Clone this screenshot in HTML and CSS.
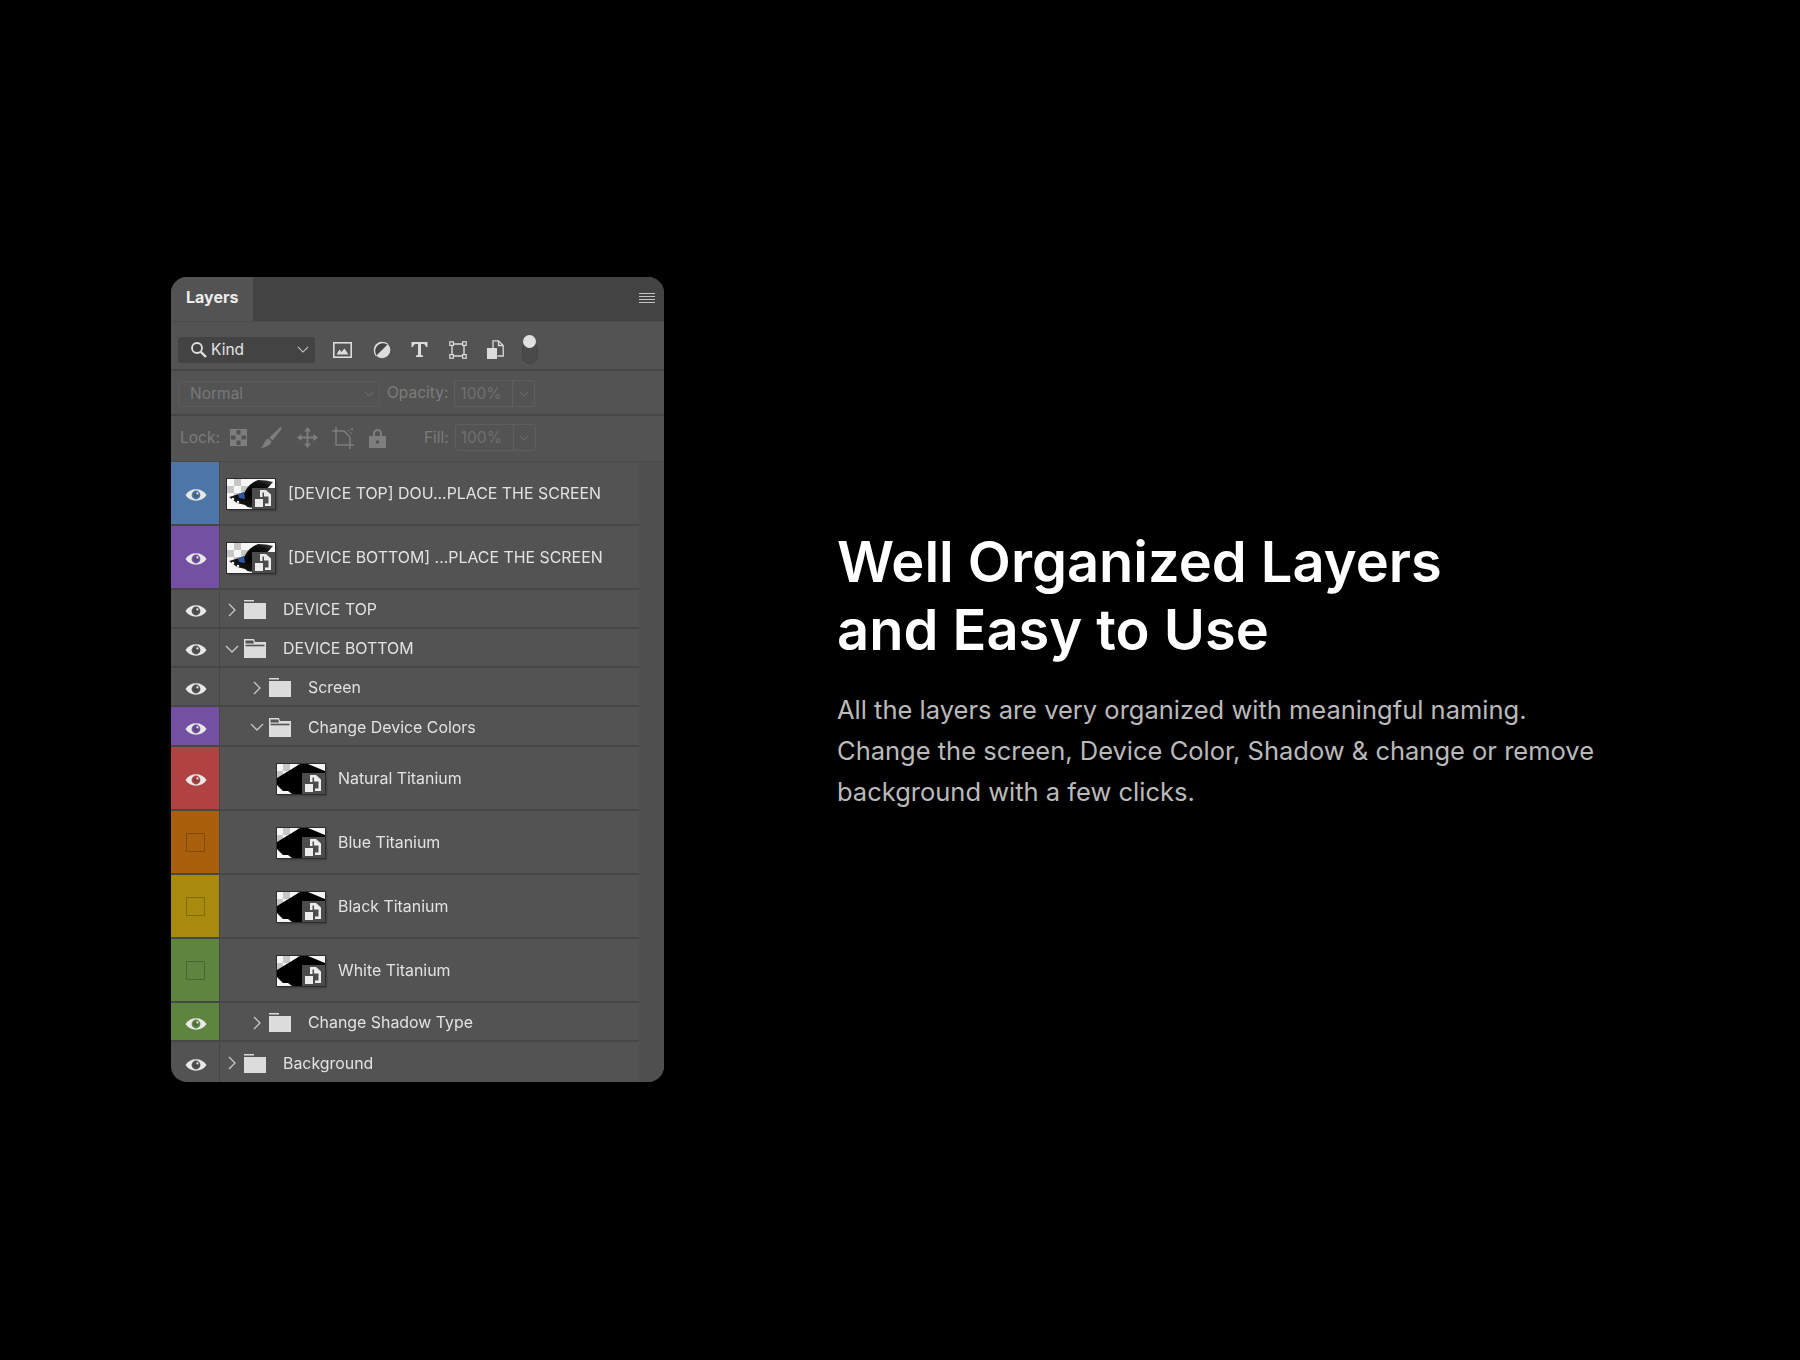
FILE: index.html
```html
<!DOCTYPE html>
<html lang="en">
<head>
    <meta charset="UTF-8">
    <title>Well Organized Layers</title>
    <link rel="stylesheet" href="styles.css">
</head>
<body>
    <!-- shared icons -->
    <svg class="sprite" xmlns="http://www.w3.org/2000/svg">
        <defs>
            <radialGradient id="blob" cx="0.55" cy="0.5" r="0.6">
                <stop offset="0" stop-color="#000"/>
                <stop offset="0.7" stop-color="#111"/>
                <stop offset="1" stop-color="#3a3a3a"/>
            </radialGradient>
        </defs>
        <symbol id="eye" viewBox="0 0 22 14">
            <path d="M.5 7C5 -.6 17 -.6 21.500 7C17 14.600 5 14.600 .5 7Z" fill="#e8e8e8"/>
            <circle cx="11" cy="7" r="4.400" fill="currentColor"/>
            <circle cx="11" cy="7" r="2.400" fill="#333" opacity=".35"/>
            <circle cx="12.400" cy="5.400" r="1.100" fill="#e8e8e8"/>
        </symbol>
        <symbol id="folder" viewBox="0 0 22 19">
            <path d="M0 0H10V1.500H0ZM0 3H22V19H0Z" fill="#dcdcdc"/>
        </symbol>
        <symbol id="folder-open" viewBox="0 0 22 19">
            <path d="M0 0H10L11 3H22V19H0Z" fill="#dcdcdc"/>
            <path d="M1.500 6.500H20.500" stroke="#535353" stroke-width="1.600"/>
            <path d="M1.500 1.500H9.200L10 4.600H1.500Z" fill="#535353"/>
        </symbol>
        <symbol id="chev-right" viewBox="0 0 8 14">
            <path d="M1 1L7 7L1 13" fill="none" stroke="#c8c8c8" stroke-width="1.300"/>
        </symbol>
        <symbol id="chev-down" viewBox="0 0 14 8">
            <path d="M1 1L7 7L13 1" fill="none" stroke="#c8c8c8" stroke-width="1.300"/>
        </symbol>
        <symbol id="badge" viewBox="0 0 23 21">
            <rect width="23" height="21" fill="#4c4c4c"/>
            <path d="M8 2H14L19 6.500V18H13V15.500H16.500V8.500H12V4.500H10.500V9H8Z" fill="#ececec"/>
            <rect x="3" y="11" width="8" height="8" fill="#ececec"/>
        </symbol>
        <symbol id="thumb-device" viewBox="0 0 48 30">
            <rect width="48" height="30" fill="#f6f6f6"/>
            <path d="M7 0H14V7H7ZM14 7H21V14H14ZM0 7H7V14H0ZM7 14H14V21H7Z" fill="#c6c6c6"/>
            <path d="M17 14Q22 4 31 1Q40 1 46 3L38 12L28 28Q21 30 18 26L10 24L2 18L12 15Z" fill="url(#blob)"/>
            <path d="M11 15L17 13L18 20L12 19Z" fill="#2f56a0"/>
            <circle cx="6" cy="20" r="1.200" fill="#f6f6f6"/>
            <circle cx="11" cy="23" r="1.200" fill="#f6f6f6"/>
            <use href="#badge" x="25" y="9" width="23" height="21"/>
        </symbol>
        <symbol id="thumb-color" viewBox="0 0 48 30">
            <rect width="48" height="30" fill="#f6f6f6"/>
            <path d="M6 0H13V7H6ZM13 7H20V14H13ZM0 7H6V14H0ZM20 0H24V3H20Z" fill="#c6c6c6"/>
            <path d="M0 14L23 0H31L48 7V13L30 30H15L11 27H6L0 21Z" fill="#000"/>
            <use href="#badge" x="25" y="9" width="23" height="21"/>
        </symbol>
    </svg>

    <div class="page">
        <div class="panel">
            <div class="tabbar">
                <div class="tab">Layers</div>
                <svg class="menu-icon" width="16" height="11" viewBox="0 0 16 11">
                    <path d="M0 .5H16M0 3.500H16M0 6.500H16M0 9.500H16" stroke="#c4c4c4" stroke-width="1"/>
                </svg>
            </div>

            <div class="tool-row filter-row">
                <div class="select kind-select">
                    <svg width="17" height="17" viewBox="0 0 17 17">
                        <circle cx="7" cy="7" r="5" fill="none" stroke="#e0e0e0" stroke-width="1.800"/>
                        <path d="M10.800 10.800L16 16" stroke="#e0e0e0" stroke-width="2.400"/>
                    </svg>
                    <span class="kind-label">Kind</span>
                    <svg class="select-chev" width="12" height="7"><use href="#chev-down"/></svg>
                </div>
                <div class="filter-icons">
                    <svg width="19" height="16" viewBox="0 0 19 16">
                        <rect x=".8" y=".8" width="17.400" height="14.400" fill="none" stroke="#dcdcdc" stroke-width="1.600"/>
                        <path d="M3.500 12.500L6.500 7.500L8.500 10L11.500 6.500L15.500 12.500Z" fill="#dcdcdc"/>
                    </svg>
                    <svg width="18" height="18" viewBox="0 0 18 18">
                        <circle cx="9" cy="9" r="8.300" fill="#dcdcdc"/>
                        <path d="M3.200 14.800A8.300 8.300 0 0 1 14.800 3.200Z" fill="#444"/>
                        <path d="M3.200 14.800A8.300 8.300 0 0 1 14.800 3.200" fill="none" stroke="#dcdcdc" stroke-width="1.200"/>
                    </svg>
                    <svg width="17" height="15" viewBox="0 0 17 15">
                        <path d="M.5 0H16.500V5H15Q14.500 2 12 2H10V13L12 13.600V15H5V13.600L7 13V2H5Q2.500 2 2 5H.5Z" fill="#dcdcdc"/>
                    </svg>
                    <svg width="18" height="18" viewBox="0 0 18 18">
                        <path d="M3 3H15V15H3Z" fill="none" stroke="#dcdcdc" stroke-width="1.400"/>
                        <g fill="#535353" stroke="#dcdcdc" stroke-width="1.200">
                            <rect x=".8" y=".8" width="3.600" height="3.600"/>
                            <rect x="13.600" y=".8" width="3.600" height="3.600"/>
                            <rect x=".8" y="13.600" width="3.600" height="3.600"/>
                            <rect x="13.600" y="13.600" width="3.600" height="3.600"/>
                        </g>
                    </svg>
                    <svg width="17" height="19" viewBox="0 0 17 19">
                        <path d="M6 8V.8H11.500L16.200 5.500V16H10.500M11.500 .8V5.500H16.200" fill="none" stroke="#dcdcdc" stroke-width="1.300"/>
                        <rect x="0" y="8" width="10" height="11" fill="#dcdcdc"/>
                    </svg>
                </div>
                <div class="filter-toggle"><span class="toggle-knob"></span></div>
            </div>

            <div class="tool-row blend-row">
                <div class="select blend-select">
                    <span>Normal</span>
                    <svg class="select-chev" width="10" height="6" viewBox="0 0 10 6"><path d="M1 1L5 5L9 1" fill="none" stroke="#6e6e6e" stroke-width="1"/></svg>
                </div>
                <span class="dim-label">Opacity:</span>
                <div class="percent-box"><span class="percent-value">100%</span><span class="percent-arrow"><svg width="10" height="6" viewBox="0 0 10 6"><path d="M1 1L5 5L9 1" fill="none" stroke="#6e6e6e" stroke-width="1"/></svg></span></div>
            </div>

            <div class="tool-row lock-row">
                <span class="dim-label lock-label">Lock:</span>
                <div class="lock-icons">
                    <svg width="17" height="17" viewBox="0 0 17 17">
                        <rect width="17" height="17" fill="#7e7e7e"/>
                        <path d="M6.500 1H10.500V5.500H6.500ZM1 6.500H5.500V10.500H1ZM11.500 6.500H16V10.500H11.500ZM6.500 11.500H10.500V16H6.500Z" fill="#535353"/>
                    </svg>
                    <svg width="21" height="21" viewBox="0 0 21 21">
                        <path d="M19.500 0L21 1.500L11.500 13.500L8.500 10.500Z" fill="#7e7e7e"/>
                        <path d="M7.500 11.500L10.500 14.500C9 18.500 5 20.500 0 21C3 18.500 3 13 7.500 11.500Z" fill="#7e7e7e"/>
                    </svg>
                    <svg width="21" height="21" viewBox="0 0 21 21">
                        <path d="M10.500 2V19M2 10.500H19" stroke="#7e7e7e" stroke-width="1.800"/>
                        <path d="M10.500 0L14 4.500H7ZM10.500 21L14 16.500H7ZM0 10.500L4.500 7V14ZM21 10.500L16.500 7V14Z" fill="#7e7e7e"/>
                    </svg>
                    <svg width="22" height="22" viewBox="0 0 22 22">
                        <path d="M4 0V18H22M0 4H12L18 10V22" fill="none" stroke="#7e7e7e" stroke-width="1.500"/>
                        <circle cx="20" cy="2" r="1" fill="#7e7e7e"/>
                        <circle cx="17" cy="3.500" r=".8" fill="#7e7e7e"/>
                        <circle cx="19" cy="6" r=".8" fill="#7e7e7e"/>
                    </svg>
                    <svg width="17" height="20" viewBox="0 0 17 20">
                        <path d="M4 8V5.500A4.500 4.500 0 0 1 13 5.500V8H11V5.500A2.500 2.500 0 0 0 6 5.500V8Z" fill="#7e7e7e"/>
                        <path d="M0 8H17V20H0Z" fill="#7e7e7e"/>
                        <circle cx="8.500" cy="14" r="1.800" fill="#535353"/>
                    </svg>
                </div>
                <span class="dim-label fill-label">Fill:</span>
                <div class="percent-box"><span class="percent-value">100%</span><span class="percent-arrow"><svg width="10" height="6" viewBox="0 0 10 6"><path d="M1 1L5 5L9 1" fill="none" stroke="#6e6e6e" stroke-width="1"/></svg></span></div>
            </div>

            <div class="layers">
                <div class="layer-rows">
                    <div class="layer layer-tall tag-blue">
                        <div class="vis"><svg class="eye" width="22" height="14"><use href="#eye"/></svg></div>
                        <div class="layer-body"><svg class="thumb" width="48" height="30"><use href="#thumb-device"/></svg><span class="name">[DEVICE TOP] DOU...PLACE THE SCREEN</span></div>
                    </div>
                    <div class="layer layer-tall tag-purple">
                        <div class="vis"><svg class="eye" width="22" height="14"><use href="#eye"/></svg></div>
                        <div class="layer-body"><svg class="thumb" width="48" height="30"><use href="#thumb-device"/></svg><span class="name">[DEVICE BOTTOM] ...PLACE THE SCREEN</span></div>
                    </div>
                    <div class="layer">
                        <div class="vis"><svg class="eye" width="22" height="14"><use href="#eye"/></svg></div>
                        <div class="layer-body group"><span class="chev"><svg width="8" height="14"><use href="#chev-right"/></svg></span><svg class="folder" width="22" height="19"><use href="#folder"/></svg><span class="name">DEVICE TOP</span></div>
                    </div>
                    <div class="layer">
                        <div class="vis"><svg class="eye" width="22" height="14"><use href="#eye"/></svg></div>
                        <div class="layer-body group"><span class="chev"><svg width="14" height="8"><use href="#chev-down"/></svg></span><svg class="folder" width="22" height="19"><use href="#folder-open"/></svg><span class="name">DEVICE BOTTOM</span></div>
                    </div>
                    <div class="layer">
                        <div class="vis"><svg class="eye" width="22" height="14"><use href="#eye"/></svg></div>
                        <div class="layer-body group nested"><span class="chev"><svg width="8" height="14"><use href="#chev-right"/></svg></span><svg class="folder" width="22" height="19"><use href="#folder"/></svg><span class="name">Screen</span></div>
                    </div>
                    <div class="layer layer-extra tag-purple">
                        <div class="vis"><svg class="eye" width="22" height="14"><use href="#eye"/></svg></div>
                        <div class="layer-body group nested"><span class="chev"><svg width="14" height="8"><use href="#chev-down"/></svg></span><svg class="folder" width="22" height="19"><use href="#folder-open"/></svg><span class="name">Change Device Colors</span></div>
                    </div>
                    <div class="layer layer-tall tag-red">
                        <div class="vis"><svg class="eye" width="22" height="14"><use href="#eye"/></svg></div>
                        <div class="layer-body child"><svg class="thumb" width="48" height="30"><use href="#thumb-color"/></svg><span class="name">Natural Titanium</span></div>
                    </div>
                    <div class="layer layer-tall tag-orange">
                        <div class="vis"><span class="hidden-box"></span></div>
                        <div class="layer-body child"><svg class="thumb" width="48" height="30"><use href="#thumb-color"/></svg><span class="name">Blue Titanium</span></div>
                    </div>
                    <div class="layer layer-tall tag-yellow">
                        <div class="vis"><span class="hidden-box"></span></div>
                        <div class="layer-body child"><svg class="thumb" width="48" height="30"><use href="#thumb-color"/></svg><span class="name">Black Titanium</span></div>
                    </div>
                    <div class="layer layer-tall tag-green">
                        <div class="vis"><span class="hidden-box"></span></div>
                        <div class="layer-body child"><svg class="thumb" width="48" height="30"><use href="#thumb-color"/></svg><span class="name">White Titanium</span></div>
                    </div>
                    <div class="layer tag-green">
                        <div class="vis"><svg class="eye" width="22" height="14"><use href="#eye"/></svg></div>
                        <div class="layer-body group nested"><span class="chev"><svg width="8" height="14"><use href="#chev-right"/></svg></span><svg class="folder" width="22" height="19"><use href="#folder"/></svg><span class="name">Change Shadow Type</span></div>
                    </div>
                    <div class="layer layer-last">
                        <div class="vis"><svg class="eye" width="22" height="14"><use href="#eye"/></svg></div>
                        <div class="layer-body group"><span class="chev"><svg width="8" height="14"><use href="#chev-right"/></svg></span><svg class="folder" width="22" height="19"><use href="#folder"/></svg><span class="name">Background</span></div>
                    </div>
                </div>
                <div class="scroll-track"></div>
            </div>
        </div>

        <div class="copy">
            <h1>Well Organized Layers<br>and Easy to Use</h1>
            <p>All the layers are very organized with meaningful naming.<br>Change the screen, Device Color, Shadow &amp; change or remove<br>background with a few clicks.</p>
        </div>
    </div>
</body>
</html>
```

FILE: styles.css
```css
html, body {
    margin: 0;
    background-color: #000;
    font-family: Inter, "Noto Sans", sans-serif;
}

.sprite {
    position: absolute;
    width: 0;
    height: 0;
}

.page {
    display: flex;
    align-items: flex-start;
    box-sizing: border-box;
    height: 1360px;
    padding: 277px 0 0 171px;
}

/* layers panel */
.panel {
    width: 493px;
    flex-shrink: 0;
    background-color: #535353;
    border-radius: 16px;
    overflow: hidden;
    filter: blur(0.35px);
}

.tabbar {
    display: flex;
    align-items: center;
    justify-content: space-between;
    height: 44px;
    padding-right: 9px;
    background-color: #434343;
    border-bottom: 1px solid #4a4a4a;
}

.menu-icon {
    margin-bottom: 2px;
}

.tab {
    display: flex;
    align-items: center;
    box-sizing: border-box;
    width: 82px;
    height: 44px;
    padding: 0 0 4px 15px;
    background-color: #535353;
    color: #ececec;
    font-size: 16px;
    font-weight: 700;
}

.tool-row {
    display: flex;
    align-items: center;
    box-sizing: border-box;
    border-bottom: 2px solid #464646;
    padding-left: 7px;
}

.filter-row {
    height: 49px;
    padding-top: 8px;
}

.blend-row {
    height: 45px;
    padding-top: 2px;
}

.lock-row {
    height: 45px;
    padding-bottom: 2px;
    border-bottom: none;
}

.select {
    display: flex;
    align-items: center;
    box-sizing: border-box;
    height: 26px;
    border-radius: 3px;
}

.kind-select {
    width: 137px;
    padding: 0 6px 0 12px;
    background-color: #434343;
    color: #e4e4e4;
    font-size: 15.5px;
}

.kind-label {
    margin-left: 4px;
}

.select-chev {
    margin-left: auto;
}

.blend-select {
    width: 202px;
    padding: 0 5px 0 11px;
    border: 1px solid #5a5a5a;
    color: #787878;
    font-size: 15.5px;
}

.filter-icons {
    display: flex;
    align-items: center;
    gap: 20.5px;
    margin-left: 18px;
}

.filter-toggle {
    position: relative;
    box-sizing: border-box;
    width: 16px;
    height: 23px;
    margin: 6px 0 0 18px;
    border: 1px solid #424242;
    border-radius: 8px;
    background-color: #4a4a4a;
}

.toggle-knob {
    position: absolute;
    top: -7px;
    left: 0;
    width: 13px;
    height: 13px;
    border-radius: 50%;
    background-color: #e0e0e0;
}

.dim-label {
    color: #7c7c7c;
    font-size: 15.5px;
}

.blend-row .dim-label {
    margin-left: 7px;
    margin-top: -3px;
}

.lock-label {
    margin-left: 2px;
}

.fill-label {
    margin-left: 38px;
}

.lock-icons {
    display: flex;
    align-items: center;
    gap: 14.5px;
    margin-left: 10px;
}

.percent-box {
    display: flex;
    align-items: center;
    box-sizing: border-box;
    width: 81px;
    height: 27px;
    margin-left: 6px;
    border: 1px solid #5e5e5e;
    border-radius: 3px;
    color: #707070;
    font-size: 15.5px;
}

.percent-value {
    width: 57px;
    padding-left: 5px;
    box-sizing: border-box;
}

.percent-arrow {
    display: flex;
    align-items: center;
    justify-content: center;
    flex: 1;
    height: 100%;
    border-left: 1px solid #5e5e5e;
}

/* layer list */
.layers {
    display: flex;
    border-top: 1px solid #4a4a4a;
}

.layer-rows {
    width: 468px;
}

.scroll-track {
    flex: 1;
    background-color: #4f4f4f;
}

.layer {
    display: flex;
    box-sizing: border-box;
    height: 39px;
    padding-top: 0;
    border-bottom: 2px solid #474747;
    color: #535353;
}

.layer-tall {
    height: 64px;
}

.layer-extra {
    height: 40px;
}

.layer-last {
    height: 40px;
    border-bottom: none;
}

.vis {
    display: flex;
    align-items: center;
    justify-content: center;
    box-sizing: border-box;
    width: 49px;
    height: 100%;
    padding-left: 1px;
    border-right: 1px solid #474747;
}

.layer:not(.layer-tall) .vis,
.layer:not(.layer-tall) .layer-body {
    padding-top: 2px;
}

.tag-blue .vis { background-color: #4d76a6; color: #4d76a6; }
.tag-purple .vis { background-color: #7350a2; color: #7350a2; }
.tag-red .vis { background-color: #b04242; color: #b04242; }
.tag-orange .vis { background-color: #a8600c; color: #a8600c; }
.tag-yellow .vis { background-color: #a88a0c; color: #a88a0c; }
.tag-green .vis { background-color: #5d8540; color: #5d8540; }

.eye {
    margin-top: 3px;
}

.hidden-box {
    box-sizing: border-box;
    width: 19px;
    height: 19px;
    margin-top: 1px;
    border: 1px solid rgba(0, 0, 0, 0.22);
}

.layer-body {
    display: flex;
    align-items: center;
    flex: 1;
    padding-left: 7px;
}

.layer-body.group {
    padding-left: 3px;
}

.layer-body.nested {
    padding-left: 28px;
}

.layer-body.child {
    padding-left: 57px;
}

.thumb {
    flex-shrink: 0;
    margin-top: 2px;
    outline: 1px solid #2c2c2c;
    box-shadow: 2px 2px 2px rgba(0, 0, 0, 0.25);
}

.chev {
    display: flex;
    align-items: center;
    justify-content: center;
    width: 17px;
}

.folder {
    margin-left: 4px;
}

.name {
    color: #e2e2e2;
    font-size: 15.9px;
    white-space: nowrap;
}

.thumb + .name {
    margin-left: 13px;
}

.folder + .name {
    margin-left: 17px;
}

/* right hand copy */
.copy {
    margin: 251px 0 0 173px;
}

.copy h1 {
    margin: 0;
    color: #fff;
    font-size: 56px;
    font-weight: 600;
    line-height: 68px;
}

.copy p {
    margin: 25px 0 0;
    color: #bababa;
    font-size: 25.5px;
    line-height: 41px;
}
```
